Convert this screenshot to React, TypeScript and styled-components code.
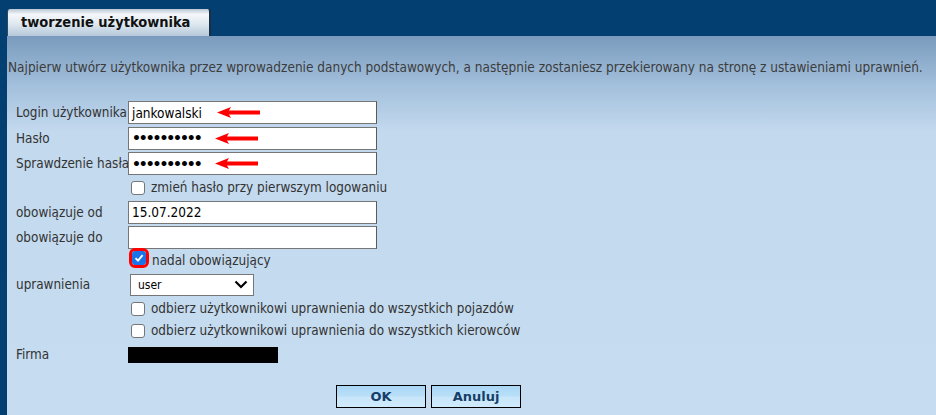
import styled, { createGlobalStyle } from 'styled-components';

const Global = createGlobalStyle`
  html, body { margin: 0; padding: 0; }
  body {
    background: #043f72;
    font-family: "DejaVu Sans Condensed", "DejaVu Sans", Tahoma, sans-serif;
    width: 936px;
    height: 415px;
    overflow: hidden;
  }
`;

const Page = styled.div`
  display: flex;
  flex-direction: column;
  height: 415px;
  padding-left: 7px;
`;

const TabBar = styled.div`
  height: 36px;
  display: flex;
  align-items: flex-end;
`;

const Tab = styled.div`
  width: 204px;
  height: 27px;
  box-sizing: border-box;
  border-left: 1px solid #2a4a66;
  border-right: 2px solid #1b2f44;
  border-radius: 3px 3px 0 0;
  background: linear-gradient(#b9c6d2 0%, #f4f7fa 20%, #dfe8f0 55%, #b5c8d9 100%);
  font-family: "DejaVu Sans Condensed", "DejaVu Sans", sans-serif;
  font-weight: bold;
  font-size: 14.5px;
  white-space: nowrap;
  color: #111;
  padding: 5px 0 0 13px;
`;

const Panel = styled.div`
  flex: 1;
  background: linear-gradient(#7a9bbd 0px, #a3c0dc 50px, #c3d9ee 95px, #c6dcf0 100%);
  padding: 23px 0 0 1px;
`;

const Intro = styled.p`
  margin: 0 0 25px;
  line-height: 16px;
  font-size: 13.5px;
  color: #3c3c3c;
  white-space: nowrap;
`;

const Form = styled.div`
  display: grid;
  grid-template-columns: 112px 1fr;
  grid-template-rows: 25.5px 25.5px 25.5px 22.5px 26px 24px 22.5px 26px 22px 22px 26px;
  padding-left: 8px;
  font-size: 13.4px;
  color: #333;
`;

const Label = styled.label`
  display: flex;
  align-items: center;
  white-space: nowrap;
`;

const Field = styled.div`
  display: flex;
  align-items: center;
`;

const TextBox = styled.div`
  width: 249px;
  height: 23px;
  box-sizing: border-box;
  background: #fff;
  border: 1px solid #767676;
  border-right-color: #5a5a5a;
  display: flex;
  align-items: center;
  padding-left: 3px;
  gap: 15px;
  font-size: 13.5px;
  color: #000;
`;

const Dots = styled.span`
  font-family: "DejaVu Sans", sans-serif;
  font-size: 14px;
  font-weight: bold;
  letter-spacing: -2.1px;
  color: #000;
`;

const Check = styled.span<{ $checked?: boolean; $marked?: boolean }>`
  width: 14px;
  height: 14px;
  box-sizing: border-box;
  border-radius: 3px;
  border: 1px solid ${(p) => (p.$checked ? '#1a73e8' : '#767676')};
  background: ${(p) => (p.$checked ? '#1a73e8' : '#fff')};
  display: inline-flex;
  align-items: center;
  justify-content: center;
  flex-shrink: 0;
  outline: ${(p) => (p.$marked ? '3px solid #ff0000' : 'none')};
  outline-offset: 0px;
  margin-top: ${(p) => (p.$marked ? -4 : 0)}px;
`;

const CheckRow = styled.div<{ $marked?: boolean }>`
  display: flex;
  align-items: center;
  gap: 6px;
  padding-left: ${(p) => (p.$marked ? 4 : 3)}px;
  white-space: nowrap;
`;

const Select = styled.div`
  margin-left: 2px;
  width: 124px;
  height: 22px;
  box-sizing: border-box;
  background: #fff;
  border: 1px solid #767676;
  display: flex;
  align-items: center;
  justify-content: space-between;
  padding: 0 5px 0 7px;
  font-size: 12px;
  color: #000;
`;

const Redacted = styled.div`
  width: 150px;
  height: 16px;
  background: #000;
`;

const Buttons = styled.div`
  display: flex;
  gap: 5px;
  padding: 17px 0 0 328px;
`;

const Button = styled.button`
  width: 90px;
  height: 23px;
  border: 1px solid #000;
  background: linear-gradient(#a9d6f5 0%, #b8dff8 45%, #c9e6fa 55%, #cfeafc 100%);
  font-family: "DejaVu Sans", Verdana, sans-serif;
  font-weight: bold;
  font-size: 13px;
  color: #163e69;
  padding: 0;
`;

const Arrow = () => (
  <svg width="43" height="11" viewBox="0 0 43 11">
    <path d="M0 5.5 L14 0 L12 3.6 L43 3.6 L43 7.4 L12 7.4 L14 11 Z" fill="#ff0000" />
  </svg>
);

const Tick = () => (
  <svg width="10" height="10" viewBox="0 0 10 10">
    <path d="M1.5 5.2 L4 7.6 L8.6 2.2" stroke="#fff" strokeWidth="1.8" fill="none" />
  </svg>
);

const Chevron = () => (
  <svg width="14" height="9" viewBox="0 0 14 9">
    <path d="M1.5 1.5 L7 7 L12.5 1.5" stroke="#000" strokeWidth="2.2" fill="none" />
  </svg>
);

export default function App() {
  return (
    <>
      <Global />
      <Page>
        <TabBar>
          <Tab>tworzenie użytkownika</Tab>
        </TabBar>
        <Panel>
          <Intro>
            Najpierw utwórz użytkownika przez wprowadzenie danych podstawowych, a następnie zostaniesz przekierowany na stronę z ustawieniami uprawnień.
          </Intro>
          <Form>
            <Label>Login użytkownika</Label>
            <Field>
              <TextBox>
                jankowalski
                <Arrow />
              </TextBox>
            </Field>
            <Label>Hasło</Label>
            <Field>
              <TextBox>
                <Dots>••••••••••</Dots>
                <Arrow />
              </TextBox>
            </Field>
            <Label>Sprawdzenie hasła</Label>
            <Field>
              <TextBox>
                <Dots>••••••••••</Dots>
                <Arrow />
              </TextBox>
            </Field>
            <span />
            <CheckRow>
              <Check />
              zmień hasło przy pierwszym logowaniu
            </CheckRow>
            <Label>obowiązuje od</Label>
            <Field>
              <TextBox>15.07.2022</TextBox>
            </Field>
            <Label>obowiązuje do</Label>
            <Field>
              <TextBox />
            </Field>
            <span />
            <CheckRow $marked>
              <Check $checked $marked>
                <Tick />
              </Check>
              nadal obowiązujący
            </CheckRow>
            <Label>uprawnienia</Label>
            <Field>
              <Select>
                user
                <Chevron />
              </Select>
            </Field>
            <span />
            <CheckRow>
              <Check />
              odbierz użytkownikowi uprawnienia do wszystkich pojazdów
            </CheckRow>
            <span />
            <CheckRow>
              <Check />
              odbierz użytkownikowi uprawnienia do wszystkich kierowców
            </CheckRow>
            <Label>Firma</Label>
            <Field>
              <Redacted />
            </Field>
          </Form>
          <Buttons>
            <Button>OK</Button>
            <Button>Anuluj</Button>
          </Buttons>
        </Panel>
      </Page>
    </>
  );
}
